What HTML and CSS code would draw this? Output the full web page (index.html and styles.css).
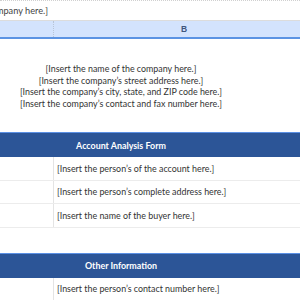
FILE: index.html
```html
<!DOCTYPE html>
<html>
<head>
<meta charset="utf-8">
<link rel="stylesheet" href="styles.css">
</head>
<body>
<div class="sheet">
  <div class="formula"><div class="formula-box"><span class="formula-text">[Insert the name of the company here.]</span></div></div>
  <div class="colhead">
    <div class="ch ch-a"></div>
    <div class="ch ch-b">B</div>
  </div>
  <div class="address">
    <div class="addr-line">[Insert the name of the company here.]</div>
    <div class="addr-line">[Insert the company’s street address here.]</div>
    <div class="addr-line">[Insert the company’s city, state, and ZIP code here.]</div>
    <div class="addr-line">[Insert the company’s contact and fax number here.]</div>
  </div>
  <div class="band">Account Analysis Form</div>
  <div class="row"><div class="cell-a"></div><div class="cell-b">[Insert the person’s of the account here.]</div></div>
  <div class="row"><div class="cell-a"></div><div class="cell-b">[Insert the person’s complete address here.]</div></div>
  <div class="row"><div class="cell-a"></div><div class="cell-b">[Insert the name of the buyer here.]</div></div>
  <div class="empty"></div>
  <div class="band">Other Information</div>
  <div class="row"><div class="cell-a"></div><div class="cell-b">[Insert the person’s contact number here.]</div></div>
</div>
</body>
</html>
```
FILE: styles.css
```css
* { box-sizing: border-box; }
html, body { margin: 0; padding: 0; background: #fff; }
body { width: 300px; height: 300px; overflow: hidden; font-family: Lato, "Open Sans", sans-serif; font-size: 8.9px; color: #333; }
.sheet { width: 300px; }
.formula { height: 20px; border-top: 1px dotted #d0d0d0; display: flex; align-items: center; }
.formula-box { width: 48px; flex: none; display: flex; justify-content: flex-end; }
.formula-text { flex: none; white-space: nowrap; color: #444; font-size: 9.2px; }
.colhead { height: 19px; display: grid; grid-template-columns: 54px 260px; background: #d3e3fd; border-top: 1px solid #dcdcdc; border-bottom: 2px solid #5b93e3; }
.ch { display: flex; align-items: center; justify-content: center; font-family: "Liberation Sans", sans-serif; font-weight: bold; font-size: 8.5px; color: #41567d; }
.ch-a { border-right: 1px dotted #b8c4d6; }
.address { height: 93px; padding-top: 24px; display: flex; flex-direction: column; align-items: center; padding-right: 58px; }
.addr-line { line-height: 11.7px; white-space: nowrap; }
.band { height: 25px; background: #2c5597; border-top: 1px solid #5b90e4; color: #fff; font-weight: bold; display: flex; align-items: center; justify-content: center; padding-right: 58px; }
.row { height: 23.5px; display: grid; grid-template-columns: 54px 1fr; border-bottom: 1px solid #ececec; }
.cell-a { border-right: 1px solid #e4e4e4; }
.cell-b { display: flex; align-items: center; padding-left: 3px; white-space: nowrap; }
.empty { height: 25px; }
```
